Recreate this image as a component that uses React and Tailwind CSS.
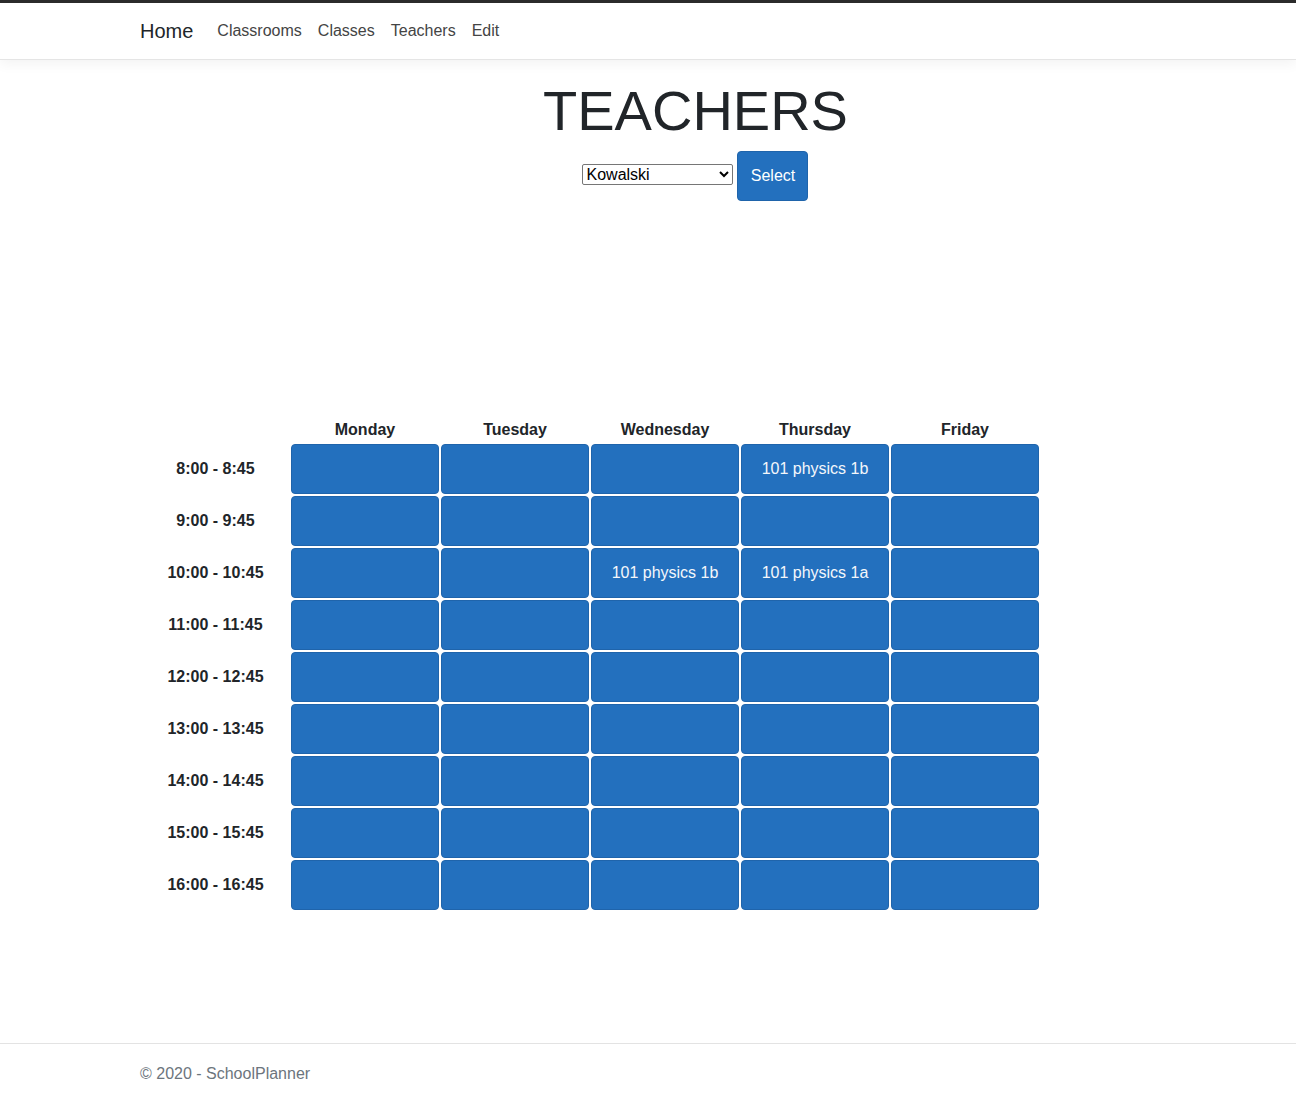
const days = ["Monday", "Tuesday", "Wednesday", "Thursday", "Friday"];

const hours = [
  "8:00 - 8:45",
  "9:00 - 9:45",
  "10:00 - 10:45",
  "11:00 - 11:45",
  "12:00 - 12:45",
  "13:00 - 13:45",
  "14:00 - 14:45",
  "15:00 - 15:45",
  "16:00 - 16:45",
];

// lessons keyed by "row-col"
const lessons = {
  "0-3": "101 physics 1b",
  "2-2": "101 physics 1b",
  "2-3": "101 physics 1a",
};

const App = () => {
  return (
    <div className="min-h-[1098px] flex flex-col bg-white text-[#212529] font-['Liberation_Sans',Arial,sans-serif]">
      <header className="border-t-[3px] border-[#2b2b2b] border-b border-b-[#e5e5e5] bg-white shadow-[0_4px_12px_rgba(0,0,0,0.05)]">
        <nav className="h-[56px] pl-[140px] flex items-center">
          <a className="text-[20px] text-[#212529] mr-[16px]">Home</a>
          <div className="flex text-[16px] text-[#444]">
            <a className="px-[8px]">Classrooms</a>
            <a className="px-[8px]">Classes</a>
            <a className="px-[8px]">Teachers</a>
            <a className="px-[8px]">Edit</a>
          </div>
        </nav>
      </header>

      <main className="flex-1">
        <div className="ml-[140px] w-[1109px] text-center pt-[17px]">
          <h1 className="text-[56px] leading-[1.2] font-normal mb-[7px] pl-[2px]">TEACHERS</h1>
          <form className="flex justify-center items-center gap-[4px]">
            <select
              className="w-[151px] h-[21px] mb-[4px] border border-[#767676] rounded-[2px] text-[16px] text-black bg-white px-0"
              defaultValue="Kowalski"
            >
              <option>Kowalski</option>
            </select>
            <button
              type="button"
              className="h-[50px] w-[71px] pl-[2px] rounded-[4px] bg-[#2370be] border border-[#1f64ab] text-white text-[16px]"
            >
              Select
            </button>
          </form>
        </div>

        <div className="ml-[140px] mt-[217px] mb-[133px] grid grid-cols-[149px_repeat(5,148px)] gap-[2px]">
          <div className="h-[24px]" />
          {days.map((d) => (
            <div key={d} className="h-[24px] flex items-center justify-center font-bold text-[16px]">
              {d}
            </div>
          ))}
          {hours.map((h, r) => (
            <div key={h} className="contents">
              <div className="h-[50px] pl-[2px] flex items-center justify-center font-bold text-[16px]">{h}</div>
              {days.map((d, c) => (
                <div
                  key={d}
                  className="h-[50px] rounded-[4px] bg-[#2370be] border border-[#1f64ab] flex items-center justify-center text-[16px] text-[#f4f7fb]"
                >
                  {lessons[`${r}-${c}`] || ""}
                </div>
              ))}
            </div>
          ))}
        </div>
      </main>

      <footer className="border-t border-[#e3e3e3] h-[60px] pl-[140px] flex items-center text-[16px] text-[#6c757d]">
        © 2020 - SchoolPlanner
      </footer>
    </div>
  );
};

export default App;
